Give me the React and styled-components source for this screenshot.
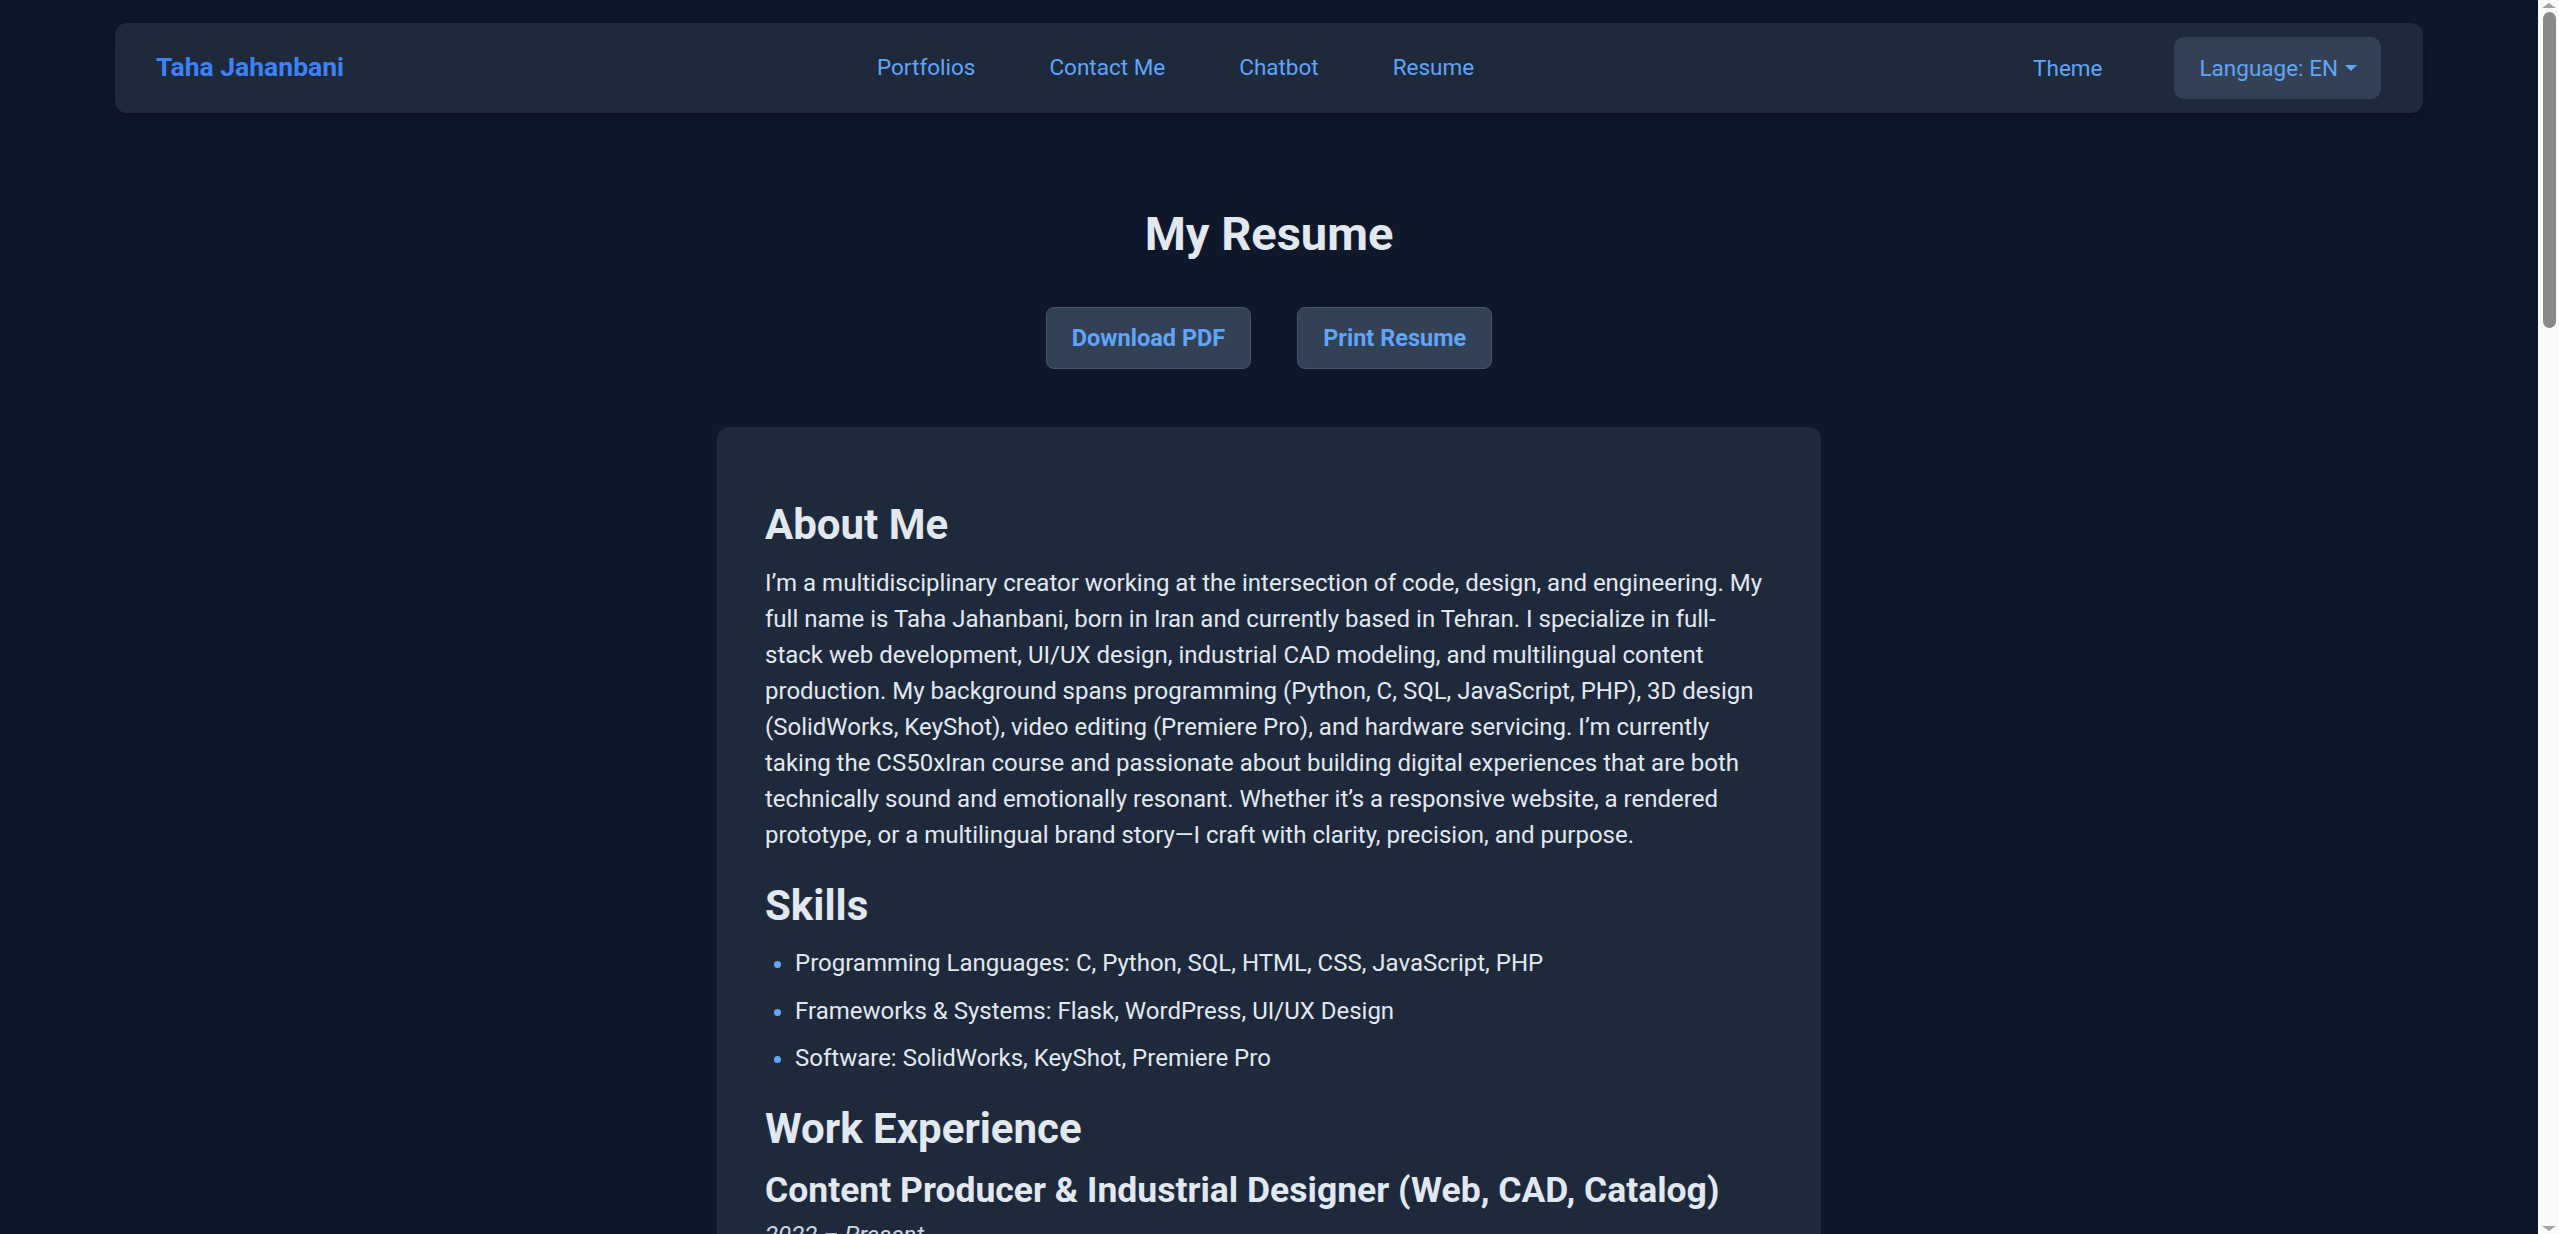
import React from "react";
import styled, {createGlobalStyle} from "styled-components";

const GlobalStyle = createGlobalStyle`
  html, body {
    margin: 0;
    padding: 0;
    background-color: #0f172a;
  }
  body {
    padding-right: 21px;
    font-family: Roboto, "Liberation Sans", sans-serif;
    font-size: 24px;
    color: #e2e8f0;
  }
  * {
    box-sizing: border-box;
  }
`;

// stand-in for the browser scrollbar seen in the screenshot
const ScrollRail = styled.div`
  position: fixed;
  top: 0;
  right: 0;
  bottom: 0;
  width: 21px;
  display: flex;
  flex-direction: column;
  align-items: center;
  background-color: #fafafa;
`;

const ScrollArrow = styled.span`
  width: 0;
  height: 0;
  margin: ${props => props.down ? "auto 0 3px" : "3px 0 0"};
  border-left: 7px solid transparent;
  border-right: 7px solid transparent;
  ${props => props.down ? "border-top: 5px solid #a3a3a3;" : "border-bottom: 5px solid #a3a3a3;"}
`;

const ScrollThumb = styled.span`
  width: 13px;
  height: 316px;
  margin: 4px 0 0 1px;
  border-radius: 7px;
  background-color: #8a8a8a;
`;

const Page = styled.div`
  padding: 23px 115px 80px;
`;

const NavBar = styled.nav`
  height: 90px;
  padding: 0 42px 3px 41px;
  display: flex;
  align-items: center;
  justify-content: space-between;
  background-color: #1e293b;
  border-radius: 12px;
  box-shadow: 0 4px 14px rgba(0, 0, 0, 0.25);
`;

const Brand = styled.a`
  font-size: 26.5px;
  font-weight: 700;
  color: #3b82f6;
  text-decoration: none;
`;

const NavLinks = styled.div`
  display: flex;
  align-items: center;
  gap: 74px;
  margin-right: 4px;
`;

const NavLink = styled.a`
  color: #60a5fa;
  font-size: 22.5px;
  text-decoration: none;
`;

const NavRight = styled.div`
  display: flex;
  align-items: center;
  gap: 50px;
  margin-top: 3px;
`;

const ThemeButton = styled.button`
  background: transparent;
  border: none;
  padding: 0 22px;
  font-family: inherit;
  font-size: 22.5px;
  color: #60a5fa;
  cursor: pointer;
`;

const LangButton = styled.button`
  display: flex;
  align-items: center;
  height: 62px;
  padding: 0 24px 0 25px;
  background-color: #334155;
  border: none;
  border-radius: 10px;
  font-family: inherit;
  font-size: 22.5px;
  color: #60a5fa;
  cursor: pointer;
`;

const Caret = styled.span`
  display: inline-block;
  margin-left: 7px;
  width: 0;
  height: 0;
  border-top: 6px solid #60a5fa;
  border-left: 6px solid transparent;
  border-right: 6px solid transparent;
`;

const Main = styled.main`
  display: flex;
  flex-direction: column;
  align-items: center;
`;

const Title = styled.h1`
  margin: 93px 0 45px;
  font-size: 47px;
  line-height: 1.2;
  font-weight: 700;
  color: #e2e8f0;
`;

const Actions = styled.div`
  display: flex;
  gap: 46px;
  margin-bottom: 58px;
`;

const ActionButton = styled.button`
  height: 62px;
  padding: 0 25px;
  background-color: #334155;
  border: 1px solid #475569;
  border-radius: 8px;
  font-family: inherit;
  font-size: 23.5px;
  font-weight: 700;
  color: #60a5fa;
  cursor: pointer;
`;

const Card = styled.section`
  width: 1104px;
  padding: 45px 48px 60px;
  background-color: #1e293b;
  border-radius: 12px;
  line-height: 36px;
`;

const SectionTitle = styled.h2`
  margin: 28px 0 14px;
  font-size: 42px;
  line-height: 1.2;
  font-weight: 700;
  color: #e2e8f0;
`;

const JobTitle = styled.h3`
  margin: 14px 0 6px;
  font-size: 35.5px;
  line-height: 1.2;
  font-weight: 700;
  color: #e2e8f0;
`;

const Period = styled.p`
  margin: 0 0 8px;
  font-style: italic;
  color: #cbd5e1;
`;

const Paragraph = styled.p`
  margin: 0;
`;

const List = styled.ul`
  margin: 0;
  padding-left: 30px;

  li {
    margin-bottom: 11.5px;
  }

  li::marker {
    color: #60a5fa;
  }
`;

const about = "I’m a multidisciplinary creator working at the intersection of code, design, and engineering. My full name is Taha Jahanbani, born in Iran and currently based in Tehran. I specialize in full-stack web development, UI/UX design, industrial CAD modeling, and multilingual content production. My background spans programming (Python, C, SQL, JavaScript, PHP), 3D design (SolidWorks, KeyShot), video editing (Premiere Pro), and hardware servicing. I’m currently taking the CS50xIran course and passionate about building digital experiences that are both technically sound and emotionally resonant. Whether it’s a responsive website, a rendered prototype, or a multilingual brand story—I craft with clarity, precision, and purpose.";

const skills = [
    "Programming Languages: C, Python, SQL, HTML, CSS, JavaScript, PHP",
    "Frameworks & Systems: Flask, WordPress, UI/UX Design",
    "Software: SolidWorks, KeyShot, Premiere Pro"
];

const jobs = [
    {
        title: "Content Producer & Industrial Designer (Web, CAD, Catalog)",
        period: "2022 – Present",
        points: [
            "Designed and modeled industrial products in SolidWorks and rendered them in KeyShot",
            "Produced multilingual web content and product catalogs",
            "Built and maintained company websites with WordPress"
        ]
    },
    {
        title: "Web Developer (Freelance)",
        period: "2020 – 2022",
        points: [
            "Developed responsive websites with HTML, CSS, JavaScript and PHP",
            "Created Flask applications backed by SQL databases",
            "Designed user interfaces with a focus on UI/UX"
        ]
    },
    {
        title: "Hardware Technician",
        period: "2018 – 2020",
        points: [
            "Serviced and repaired computer hardware",
            "Installed and configured operating systems and software"
        ]
    }
];

const education = [
    "CS50xIran – Introduction to Computer Science (in progress)",
    "Industrial Design studies – CAD modeling and product visualization"
];

const languages = [
    "Persian – Native",
    "English – Professional working proficiency"
];

const App = () => (
    <>
        <GlobalStyle/>
        <Page>
            <NavBar>
                <Brand href="#">Taha Jahanbani</Brand>
                <NavLinks>
                    <NavLink href="#">Portfolios</NavLink>
                    <NavLink href="#">Contact Me</NavLink>
                    <NavLink href="#">Chatbot</NavLink>
                    <NavLink href="#">Resume</NavLink>
                </NavLinks>
                <NavRight>
                    <ThemeButton>Theme</ThemeButton>
                    <LangButton>Language: EN<Caret/></LangButton>
                </NavRight>
            </NavBar>
            <Main>
                <Title>My Resume</Title>
                <Actions>
                    <ActionButton>Download PDF</ActionButton>
                    <ActionButton>Print Resume</ActionButton>
                </Actions>
                <Card>
                    <SectionTitle>About Me</SectionTitle>
                    <Paragraph>{about}</Paragraph>
                    <SectionTitle>Skills</SectionTitle>
                    <List>
                        {skills.map((item, index) => <li key={index}>{item}</li>)}
                    </List>
                    <SectionTitle>Work Experience</SectionTitle>
                    {jobs.map((job, index) => (
                        <div key={index}>
                            <JobTitle>{job.title}</JobTitle>
                            <Period>{job.period}</Period>
                            <List>
                                {job.points.map((point, i) => <li key={i}>{point}</li>)}
                            </List>
                        </div>
                    ))}
                    <SectionTitle>Education</SectionTitle>
                    <List>
                        {education.map((item, index) => <li key={index}>{item}</li>)}
                    </List>
                    <SectionTitle>Languages</SectionTitle>
                    <List>
                        {languages.map((item, index) => <li key={index}>{item}</li>)}
                    </List>
                </Card>
            </Main>
        </Page>
        <ScrollRail>
            <ScrollArrow/>
            <ScrollThumb/>
            <ScrollArrow down/>
        </ScrollRail>
    </>
);

export default App;
